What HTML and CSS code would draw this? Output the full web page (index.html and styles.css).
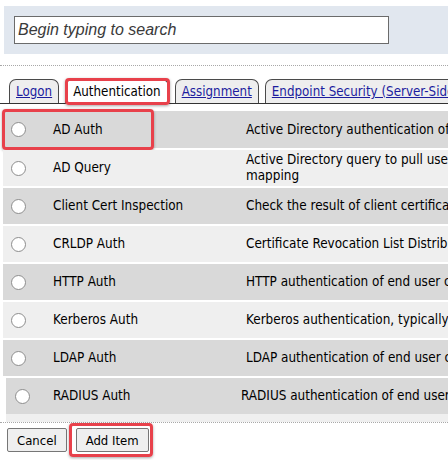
FILE: index.html
```html
<!DOCTYPE html>
<html>
<head>
<meta charset="utf-8">
<link rel="stylesheet" href="styles.css">
</head>
<body>
<div class="search-panel">
  <input class="search-input" type="text" placeholder="Begin typing to search">
</div>
<div class="sep"></div>
<div class="tabs">
  <a class="tab" href="#">Logon</a>
  <span class="tab active">Authentication<span class="callout callout-tab"></span></span>
  <a class="tab" href="#">Assignment</a>
  <a class="tab" href="#">Endpoint Security (Server-Side)</a>
</div>
<div class="rows">
  <div class="row dark first">
    <span class="cell-radio"><span class="radio"></span></span>
    <span class="cell-name">AD Auth</span>
    <span class="cell-desc">Active Directory authentication of end user credentials</span>
    <span class="callout callout-row"></span>
  </div>
  <div class="row">
    <span class="cell-radio"><span class="radio"></span></span>
    <span class="cell-name">AD Query</span>
    <span class="cell-desc">Active Directory query to pull user attributes for resource<br>mapping</span>
  </div>
  <div class="row dark">
    <span class="cell-radio"><span class="radio"></span></span>
    <span class="cell-name">Client Cert Inspection</span>
    <span class="cell-desc">Check the result of client certificate verification</span>
  </div>
  <div class="row">
    <span class="cell-radio"><span class="radio"></span></span>
    <span class="cell-name">CRLDP Auth</span>
    <span class="cell-desc">Certificate Revocation List Distribution Point authentication</span>
  </div>
  <div class="row dark">
    <span class="cell-radio"><span class="radio"></span></span>
    <span class="cell-name">HTTP Auth</span>
    <span class="cell-desc">HTTP authentication of end user credentials</span>
  </div>
  <div class="row">
    <span class="cell-radio"><span class="radio"></span></span>
    <span class="cell-name">Kerberos Auth</span>
    <span class="cell-desc">Kerberos authentication, typically used with NTLM</span>
  </div>
  <div class="row dark">
    <span class="cell-radio"><span class="radio"></span></span>
    <span class="cell-name">LDAP Auth</span>
    <span class="cell-desc">LDAP authentication of end user credentials</span>
  </div>
  <div class="row dark last">
    <span class="cell-radio"><span class="radio"></span></span>
    <span class="cell-name">RADIUS Auth</span>
    <span class="cell-desc">RADIUS authentication of end user credentials</span>
  </div>
</div>
<div class="sep sep-bottom"></div>
<div class="actions">
  <button class="btn" type="button">Cancel</button>
  <span class="btn-wrap"><button class="btn" type="button">Add Item</button><span class="callout callout-btn"></span></span>
</div>
</body>
</html>
```
FILE: styles.css
```css
html, body {
  margin: 0;
  padding: 0;
}
body {
  width: 448px;
  height: 460px;
  overflow: hidden;
  background: #fff;
  color: #000;
  font-family: "DejaVu Sans Condensed", "DejaVu Sans", sans-serif;
  font-size: 13px;
}

.search-panel {
  margin: 6px 0 0 4px;
  height: 48px;
  box-sizing: border-box;
  padding: 10px 0 0 10px;
  background: #e1e7ef;
}
.search-input {
  display: block;
  width: 375px;
  height: 28px;
  box-sizing: border-box;
  margin: 0;
  border: 1px solid #6b6b6b;
  border-radius: 0;
  padding: 0 3px;
  background: #fff;
  font: italic 16px "Liberation Sans", Arial, sans-serif;
  color: #333;
  outline: none;
}
.search-input::placeholder {
  color: #3a3a3a;
  opacity: 1;
}

.sep {
  margin-top: 11px;
  border-top: 1px dotted #a8a8a8;
}

.tabs {
  display: flex;
  gap: 6px;
  margin-top: 13px;
  padding-left: 9px;
  height: 24px;
  border-bottom: 1px solid #333;
  white-space: nowrap;
}
.tab {
  flex: none;
  position: relative;
  height: 24px;
  box-sizing: border-box;
  padding: 0 6px;
  border: 1px solid #4a4a4a;
  border-bottom: none;
  border-radius: 7px 7px 0 0;
  background: #eeeeee;
  color: #1c1c9e;
  text-decoration: underline;
  line-height: 24px;
  font-size: 13.25px;
}
.tab.active {
  height: 25px;
  margin-bottom: -1px;
  padding: 0 7px;
  background: #fff;
  color: #000;
  text-decoration: none;
}

.callout {
  position: absolute;
  border: 3px solid #e8414b;
  border-radius: 4px;
  box-shadow: 0 1px 3px rgba(0, 0, 0, 0.35);
  pointer-events: none;
}
.callout-tab {
  left: -1px;
  right: -2px;
  top: -2px;
  bottom: -1px;
}

.rows {
  display: flex;
  flex-direction: column;
  gap: 2px;
  margin-top: 7px;
  padding-left: 3px;
}
.row {
  position: relative;
  display: flex;
  align-items: center;
  height: 36px;
  background: #efefef;
  line-height: 16px;
  font-size: 13.4px;
  white-space: nowrap;
}
.row.dark {
  background: #d9d9d9;
}
.row.first {
  height: 37px;
}
.row.last {
  margin-left: 3px;
  border-bottom: 8px solid #efefef;
}
.cell-radio {
  flex: none;
  width: 50px;
  box-sizing: border-box;
  padding-left: 8px;
  display: flex;
  align-items: center;
}
.radio {
  display: block;
  width: 15px;
  height: 15px;
  box-sizing: border-box;
  border: 1px solid #8d8d8d;
  border-radius: 50%;
  background: #fff;
}
.cell-name {
  flex: none;
  width: 193px;
}
.cell-desc {
  flex: none;
}
.row.last .cell-radio {
  width: 47px;
  padding-left: 9px;
}
.row.last .cell-name {
  width: 188px;
}
.callout-row {
  left: -1px;
  top: -2px;
  bottom: -2px;
  width: 146px;
}

.sep-bottom {
  margin-top: 0;
}

.actions {
  display: flex;
  align-items: center;
  gap: 9px;
  margin-top: 5px;
  padding-left: 7px;
}
.btn-wrap {
  position: relative;
  display: inline-flex;
}
.btn {
  height: 24px;
  margin: 0;
  padding: 0 9px;
  border: 1px solid #767676;
  border-radius: 2px;
  background: #efefef;
  color: #000;
  font-family: "DejaVu Sans Condensed", "DejaVu Sans", sans-serif;
  font-size: 13px;
}
.callout-btn {
  left: -7px;
  right: -4px;
  top: -5px;
  bottom: -5px;
}
```
